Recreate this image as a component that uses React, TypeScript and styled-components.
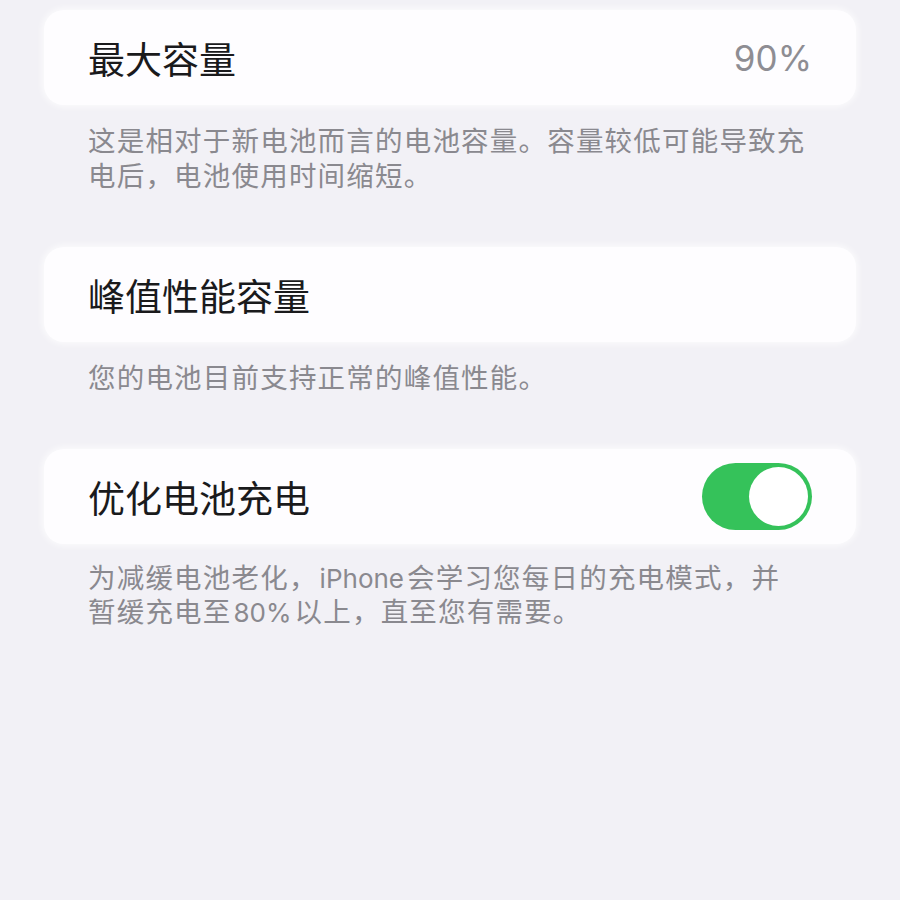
import React from "react";
import styled, { createGlobalStyle } from "styled-components";

const GlobalStyle = createGlobalStyle`
  html, body {
    margin: 0;
    padding: 0;
    background: #f2f1f6;
  }
  body {
    font-family: "Noto Sans CJK SC", "Noto Sans", sans-serif;
  }
`;

const Page = styled.div`
  width: 900px;
  height: 900px;
  background: #f2f1f6;
  padding: 10px 44px 0 44px;
  box-sizing: border-box;
  display: flex;
  flex-direction: column;
  gap: 55px;
`;

const Group = styled.section`
  display: flex;
  flex-direction: column;
`;

const Card = styled.div`
  height: 95px;
  background: #fefdff;
  border-radius: 20px;
  box-shadow: 0 0 6px 2px rgba(255, 255, 255, 0.7);
  display: flex;
  align-items: center;
  justify-content: space-between;
  padding: 0 44px;
  box-sizing: border-box;
`;

const Title = styled.span`
  font-size: 37px;
  color: #1a1a1c;
`;

const Value = styled.span`
  font-family: "Inter", "Noto Sans", sans-serif;
  font-size: 35px;
  color: #8e8d93;
`;

const Note = styled.p<{ tight?: boolean }>`
  margin: ${(p) => (p.tight ? "15px" : "17px")} 0 0 0;
  padding: 0 44px;
  font-family: "Noto Sans CJK SC", sans-serif;
  font-size: 27.5px;
  line-height: ${(p) => (p.tight ? "34px" : "35px")};
  letter-spacing: 1.2px;
  color: #8a898f;
`;

const Latin = styled.span`
  font-family: "Inter", "Noto Sans", sans-serif;
  font-size: 26px;
  line-height: 1;
  letter-spacing: 0;
  margin: 0 3px 0 2px;
`;

const Toggle = styled.div<{ on: boolean }>`
  width: 110px;
  height: 67px;
  border-radius: 34px;
  background: ${(p) => (p.on ? "#35c25a" : "#e5e5ea")};
  display: flex;
  align-items: center;
  justify-content: ${(p) => (p.on ? "flex-end" : "flex-start")};
  padding: 0 4px;
  box-sizing: border-box;
`;

const Knob = styled.span`
  width: 59px;
  height: 59px;
  border-radius: 50%;
  background: #ffffff;
`;

export default function App() {
  return (
    <>
      <GlobalStyle />
      <Page>
        <Group>
          <Card>
            <Title>最大容量</Title>
            <Value>90%</Value>
          </Card>
          <Note>
            这是相对于新电池而言的电池容量。容量较低可能导致充电后，电池使用时间缩短。
          </Note>
        </Group>
        <Group>
          <Card>
            <Title>峰值性能容量</Title>
          </Card>
          <Note>您的电池目前支持正常的峰值性能。</Note>
        </Group>
        <Group>
          <Card>
            <Title>优化电池充电</Title>
            <Toggle on>
              <Knob />
            </Toggle>
          </Card>
          <Note tight>
            为减缓电池老化，<Latin>iPhone</Latin>会学习您每日的充电模式，并
            <br />
            暂缓充电至<Latin>80%</Latin>以上，直至您有需要。
          </Note>
        </Group>
      </Page>
    </>
  );
}
